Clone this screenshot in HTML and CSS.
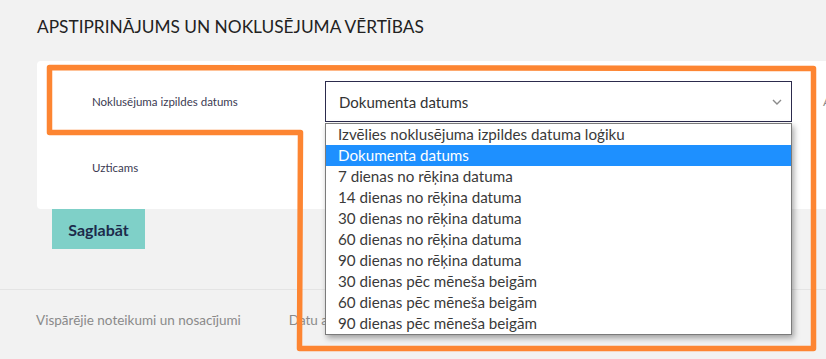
FILE: index.html
```
<!DOCTYPE html>
<html lang="lv">
<head>
  <meta charset="UTF-8">
  <title>Apstiprinājums un noklusējuma vērtības</title>
  <link rel="stylesheet" href="styles.css">
</head>
<body>
  <div class="page">
    <h1 class="page-title">APSTIPRINĀJUMS UN NOKLUSĒJUMA VĒRTĪBAS</h1>
    <div class="card">
      <div class="row row-first">
        <div class="row-label">Noklusējuma izpildes datums</div>
        <div class="select-wrap">
          <div class="select-box">
            <span>Dokumenta datums</span>
            <svg class="chevron" width="10" height="6" viewBox="0 0 10 6">
              <polyline points="1,1 5,5 9,1" fill="none" stroke="#8a8a8a" stroke-width="1.4"/>
            </svg>
          </div>
          <!-- atvērtais saraksts -->
          <ul class="select-list">
            <li>Izvēlies noklusējuma izpildes datuma loģiku</li>
            <li class="selected">Dokumenta datums</li>
            <li>7 dienas no rēķina datuma</li>
            <li>14 dienas no rēķina datuma</li>
            <li>30 dienas no rēķina datuma</li>
            <li>60 dienas no rēķina datuma</li>
            <li>90 dienas no rēķina datuma</li>
            <li>30 dienas pēc mēneša beigām</li>
            <li>60 dienas pēc mēneša beigām</li>
            <li>90 dienas pēc mēneša beigām</li>
          </ul>
        </div>
        <div class="row-aside">A</div>
      </div>
      <div class="row row-second">
        <div class="row-label">Uzticams</div>
      </div>
    </div>
    <button class="btn-save">Saglabāt</button>
  </div>
  <div class="footer">
    <a class="footer-link" href="#">Vispārējie noteikumi un nosacījumi</a>
    <a class="footer-link" href="#">Datu aizsardzība</a>
  </div>

  <svg class="annotation" width="826" height="359" viewBox="0 0 826 359">
    <path d="M49.5 67.5 L813.5 68.5 L813.5 348.5 L299.5 348.5 L300.5 132.5 L49.5 132.5 Z"
          fill="none" stroke="#fd8532" stroke-width="5.5" stroke-linejoin="round"/>
  </svg>
</body>
</html>
```

FILE: styles.css
```
html, body {
  margin: 0;
  padding: 0;
}
body {
  width: 826px;
  height: 359px;
  background: #f2f2f2;
  font-family: "Lato", "Noto Sans", sans-serif;
  color: #2f2e45;
  overflow: hidden;
  position: relative;
}
.page {
  padding-left: 37px;
}
.page-title {
  margin: 0;
  padding-top: 17px;
  height: 61px;
  box-sizing: border-box;
  font-size: 17.3px;
  line-height: 20px;
  font-weight: 400;
  color: #222;
}
.card {
  width: 900px;
  height: 148px;
  background: #fff;
  border-radius: 4px 0 0 4px;
}
.row {
  display: flex;
  align-items: center;
}
.row-first {
  padding: 20px 0;
}
.row-second {
  padding-top: 18px;
  align-items: flex-start;
}
.row-label {
  width: 233px;
  padding-left: 55px;
  font-size: 11.5px;
  line-height: 16px;
  color: #3b3a52;
}
.select-wrap {
  position: relative;
  width: 467px;
}
.select-box {
  height: 41px;
  box-sizing: border-box;
  border: 1px solid #2c2b4d;
  display: flex;
  align-items: center;
  justify-content: space-between;
  padding: 0 9px 0 13px;
  font-size: 15px;
  color: #333;
  background: #fff;
}
.chevron {
  display: block;
}
.select-list {
  position: absolute;
  top: 42px;
  left: 0;
  width: 467px;
  box-sizing: border-box;
  margin: 0;
  padding: 0;
  list-style: none;
  background: #fff;
  border: 1px solid #7b7b7b;
  box-shadow: 2px 3px 6px rgba(0, 0, 0, 0.35);
  z-index: 10;
}
.select-list li {
  height: 21px;
  line-height: 21px;
  padding-left: 12px;
  font-size: 15.2px;
  color: #3a3a3a;
}
.select-list li.selected {
  background: #1e90ff;
  color: #fff;
}
.row-aside {
  margin-left: 31px;
  font-size: 12px;
  color: #8a8a8a;
}
.btn-save {
  display: block;
  margin-left: 15px;
  width: 93px;
  height: 40px;
  border: none;
  border-radius: 0;
  background: #7fd0c8;
  color: #1c2b4b;
  font-family: inherit;
  font-size: 16px;
  font-weight: 700;
  padding: 0;
}
.footer {
  margin-top: 40px;
  border-top: 1px solid #e4e4e4;
  padding: 20px 0 0 36px;
  display: flex;
  gap: 48px;
}
.footer-link {
  font-size: 13.5px;
  line-height: 20px;
  color: #8a8a8a;
  text-decoration: none;
}
.annotation {
  position: absolute;
  top: 0;
  left: 0;
  pointer-events: none;
  z-index: 20;
}
```
